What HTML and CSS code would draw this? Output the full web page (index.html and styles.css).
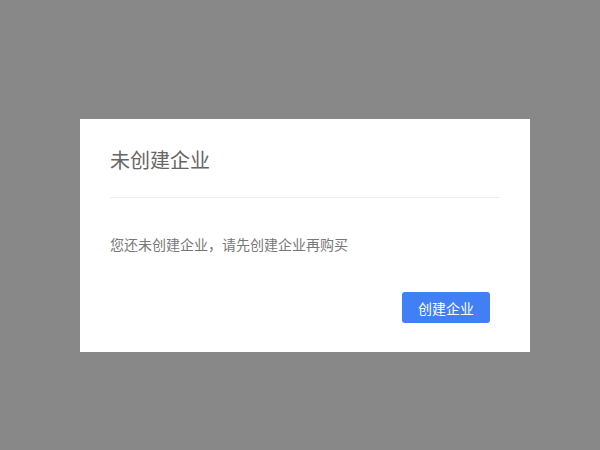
FILE: index.html
```html
<!DOCTYPE html>
<html lang="zh">
<head>
<meta charset="utf-8">
<link rel="stylesheet" href="styles.css">
</head>
<body>
<div class="backdrop">
  <div class="modal">
    <div class="modal-header">
      <h2 class="modal-title">未创建企业</h2>
    </div>
    <div class="modal-body">您还未创建企业，请先创建企业再购买</div>
    <div class="modal-footer">
      <button class="btn-primary">创建企业</button>
    </div>
  </div>
</div>
</body>
</html>
```

FILE: styles.css
```css
html, body {
  margin: 0;
  padding: 0;
  height: 100%;
}
body {
  font-family: "Noto Sans CJK SC", "Noto Sans", sans-serif;
  background: #888888;
}
.backdrop {
  box-sizing: border-box;
  height: 100%;
  padding: 119px 0 0 80px;
}
.modal {
  width: 450px;
  height: 233px;
  box-sizing: border-box;
  background: #ffffff;
  padding: 27px 30px 0 30px;
}
.modal-header {
  border-bottom: 1px solid #eeeeee;
  padding-bottom: 23px;
}
.modal-title {
  margin: 0;
  font-size: 20px;
  line-height: 28px;
  font-weight: 400;
  color: #666666;
}
.modal-body {
  margin-top: 36px;
  font-size: 14px;
  line-height: 20px;
  color: #777777;
}
.modal-footer {
  display: flex;
  justify-content: flex-end;
  padding-right: 10px;
  margin-top: 38px;
}
.btn-primary {
  width: 88px;
  height: 31px;
  border: none;
  border-radius: 3px;
  background: #4080f4;
  color: #ffffff;
  font-family: inherit;
  font-size: 14px;
  padding: 0;
}
```
